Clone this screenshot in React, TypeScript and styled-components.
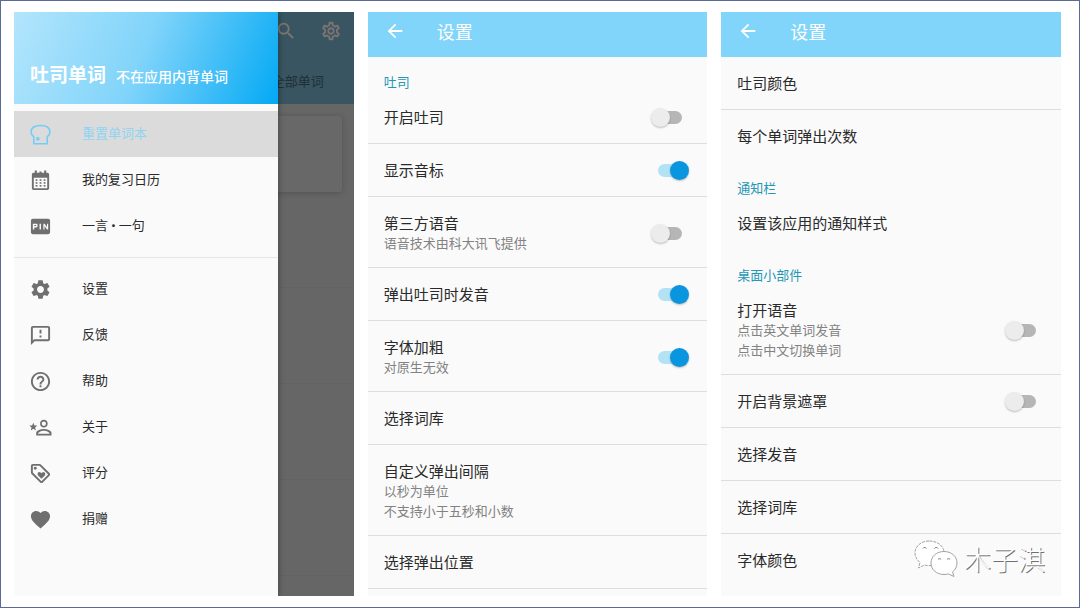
import React from "react";
import styled, { createGlobalStyle, css } from "styled-components";
import {
  MdArrowBack,
  MdFavorite,
  MdFiberPin,
  MdHelpOutline,
  MdOutlineFeedback,
  MdOutlineLoyalty,
  MdOutlineSettings,
  MdSearch,
  MdSettings,
} from "react-icons/md";

const GlobalStyle = createGlobalStyle`
  *, *::before, *::after { box-sizing: border-box; }
  body {
    margin: 0;
    background: #fff;
    color: #2a2a2a;
    font-family: "Noto Sans CJK SC", sans-serif;
    font-size: 13px;
    line-height: 20px;
  }
  button, input { font: inherit; color: inherit; }
`;

const Page = styled.main`
  display: grid;
  grid-template-columns: repeat(3, minmax(0, 1fr));
  gap: 14px;
  min-height: 100vh;
  padding: 11px 18px 11px 13px;
  border: 1px solid #5a6a96;
`;

const Phone = styled.section`
  position: relative;
  display: flex;
  flex-direction: column;
  background: #fafafa;
`;

/* ---------- home screen with the open drawer ---------- */

const HomePhone = styled.section`
  display: grid;
  overflow: hidden;
`;

const Dimmed = styled.div`
  grid-area: 1 / 1;
  display: flex;
  flex-direction: column;
  background: #666;
`;

const DimmedBar = styled.div`
  display: flex;
  flex-direction: column;
  align-items: flex-end;
  height: 92px;
  background: #385561;
  color: #1f2f37;
`;

const DimmedActions = styled.div`
  display: flex;
  gap: 23px;
  padding: 8px 12px 29px;
  color: #7d7472;
`;

const IconButton = styled.button`
  display: flex;
  padding: 0;
  border: 0;
  background: none;
`;

const DimmedTab = styled.span`
  padding-right: 30px;
`;

const DimmedCard = styled.div`
  height: 76px;
  margin: 12px 12px 0;
  border-radius: 3px;
  background: #686868;
  box-shadow: 0 1px 6px rgba(0, 0, 0, 0.2);
`;

const DimmedRow = styled.div`
  height: 96px;
  margin: 0 2px 0 12px;
  border-bottom: 1px solid #5d6466;
`;

const Drawer = styled.aside`
  grid-area: 1 / 1;
  width: 264px;
  background: #fafafa;
  box-shadow: 1px 0 5px rgba(0, 0, 0, 0.3);
`;

const DrawerHeader = styled.header`
  display: flex;
  align-items: baseline;
  gap: 10px;
  height: 92px;
  padding: 48px 16px 0;
  background: linear-gradient(112deg, #b3e5fc 0%, #81d4fa 48%, #03a9f4 100%);
  color: #fff;
`;

const AppName = styled.h1`
  margin: 0;
  font-size: 19px;
  line-height: 28px;
  font-weight: 700;
`;

const Slogan = styled.p`
  margin: 0;
  font-size: 14px;
  font-weight: 500;
`;

const MenuGroup = styled.nav`
  padding: 7px 0 8px;

  & + & {
    padding-top: 8px;
    border-top: 1px solid #e6e6e6;
  }
`;

const MenuItem = styled.a<{ $active?: boolean }>`
  display: flex;
  align-items: center;
  gap: 30px;
  height: 46px;
  padding: 0 15px;
  color: #2a2a2a;
  font-family: Roboto, "Noto Sans CJK SC", sans-serif;
  text-decoration: none;

  svg {
    color: #6f6f6f;
  }

  ${(p) =>
    p.$active &&
    css`
      background: #dbdbdb;
      color: #92d3f2;

      svg {
        color: #74cdf4;
      }
    `}
`;

/* ---------- settings screens ---------- */

const AppBar = styled.header`
  display: flex;
  align-items: center;
  gap: 31px;
  height: 45px;
  padding: 0 16px 8px;
  background: #81d4fa;
  color: #fff;
`;

const BarTitle = styled.h2`
  margin: 0;
  font-size: 18px;
  font-weight: 400;
`;

const Category = styled.h3`
  margin: 0;
  padding: 16px 16px 0;
  color: #2497b5;
  font-size: 13px;
  line-height: 18px;
  font-weight: 400;
`;

interface RowProps {
  $divider: boolean;
  $tall: boolean;
}

const rowStyle = css<RowProps>`
  display: flex;
  align-items: center;
  justify-content: space-between;
  width: 100%;
  min-height: 53px;
  padding: 16px 18px ${(p) => (p.$tall ? 14 : 16)}px 16px;
  border: 0;
  border-bottom: 1px solid ${(p) => (p.$divider ? "#dedede" : "transparent")};
  background: none;
  text-align: left;
`;

const SwitchRow = styled.label<RowProps>`
  ${rowStyle}
`;

const ButtonRow = styled.button<RowProps>`
  ${rowStyle}
`;

const RowText = styled.span`
  display: flex;
  flex-direction: column;
`;

const RowTitle = styled.span`
  font-size: 15px;
`;

const RowNote = styled.span`
  color: #828282;
`;

const Switch = styled.input`
  appearance: none;
  display: grid;
  align-items: center;
  width: 38px;
  height: 19px;
  margin: 0;

  &::before,
  &::after {
    content: "";
    grid-area: 1 / 1;
  }

  &::before {
    height: 13px;
    margin: 0 7px;
    border-radius: 7px;
    background: #b6b6b6;
  }

  &::after {
    width: 19px;
    height: 19px;
    border-radius: 50%;
    background: #ececec;
    box-shadow: 0 1px 2px rgba(0, 0, 0, 0.25);
  }

  &:checked::before {
    background: #b3e2f5;
  }

  &:checked::after {
    justify-self: end;
    background: #0a96df;
  }
`;

const Watermark = styled.div`
  position: absolute;
  right: 16px;
  bottom: 17px;
  display: flex;
  align-items: center;
  gap: 6px;
  color: #fff;
  font-size: 27px;
  line-height: 40px;
  font-weight: 300;
  text-shadow: 1px 1px 0 #707070;
`;

/* ---------- drawn icons ---------- */

const ICON = 23;

const ToastIcon = () => (
  <svg width={ICON} height={ICON} viewBox="0 0 24 24" fill="none" stroke="currentColor" strokeWidth="1.6" strokeLinejoin="round">
    <path d="M5 21.600v-7.400C3 13 2.200 11.200 2.200 9.300 2.200 4.800 6.500 2.600 12 2.600s9.800 2.200 9.800 6.700c0 1.900-.8 3.700-2.800 4.900v7.400z" />
    <path d="M9 14.500v4M7.500 15.500l3.500 2M11 15.500l-3.500 2" strokeWidth="1.200" />
  </svg>
);

const CalendarIcon = () => (
  <svg width={ICON} height={ICON} viewBox="0 0 24 24" fill="currentColor">
    <path fillRule="evenodd" d="M6 1.500h2.200V4h2.700V2.500h2.200V4h2.700V1.500H18V4h1.200c1.100 0 1.800.8 1.800 1.800v14.400c0 1-.8 1.800-1.800 1.800H4.800C3.800 22 3 21.200 3 20.200V5.800C3 4.800 3.700 4 4.800 4H6zM5 9v11h14V9z" />
    {[10.7, 13.7, 16.7].map((y) =>
      [6.9, 11.1, 15.3].map((x) => <rect key={`${x}-${y}`} x={x} y={y} width="1.900" height="1.700" />)
    )}
  </svg>
);

const AboutIcon = () => (
  <svg width={ICON} height={ICON} viewBox="0 0 24 24" fill="currentColor">
    <path fillRule="evenodd" d="M15.500 12c2.210 0 4-1.790 4-4s-1.790-4-4-4-4 1.790-4 4 1.790 4 4 4zm0-6.200c1.200 0 2.200 1 2.200 2.200s-1 2.200-2.200 2.200-2.200-1-2.200-2.200 1-2.200 2.200-2.200zm0 7.700c-2.670 0-8 1.340-8 4.200V20.300h16v-2.600c0-2.860-5.330-4.200-8-4.200zm-6.100 5c0-1.300 3.410-3.100 6.100-3.100 2.700 0 6.100 1.800 6.100 3.100z" />
    <path d="M4.500 7l1.200 2.800 3 .2-2.300 2 .7 3-2.600-1.600L1.900 15l.7-3L.3 10l3-.2z" />
  </svg>
);

const WeChatIcon = () => (
  <svg width="44" height="38" viewBox="0 0 44 38" fill="#fff" stroke="#a2a2a2" strokeWidth="1" strokeLinejoin="round">
    <path d="M15 1C7 1 1 6.500 1 13c0 4 2 7 5 9.500L4.500 28l6-3c1.500.4 3 .6 4.500.6 8 0 15-5.100 15-12.600S23 1 15 1z" strokeDasharray="3 1" />
    <path d="M30 11.500c-7.500 0-13 5-13 11.500s5.500 11.500 13 11.500c1.500 0 3-.2 4.400-.6l5.600 2.600-1.500-4.600c2.800-2 4.500-5.200 4.500-8.900 0-6.500-5.500-11.500-13-11.500z" />
    <path d="M9 8.500a2 2 0 0 1 3.500 0M20.500 8.500a2 2 0 0 1 3.500 0M24 19.500a2 2 0 0 1 3.200 0M33 19.500a2 2 0 0 1 3.200 0" fill="none" stroke="#777" />
  </svg>
);

/* ---------- data ---------- */

const mainMenu = [
  { label: "重置单词本", icon: <ToastIcon />, active: true },
  { label: "我的复习日历", icon: <CalendarIcon /> },
  { label: "一言 • 一句", icon: <MdFiberPin size={ICON} /> },
];

const moreMenu = [
  { label: "设置", icon: <MdSettings size={ICON} /> },
  { label: "反馈", icon: <MdOutlineFeedback size={ICON} /> },
  { label: "帮助", icon: <MdHelpOutline size={ICON} /> },
  { label: "关于", icon: <AboutIcon /> },
  { label: "评分", icon: <MdOutlineLoyalty size={ICON} /> },
  { label: "捐赠", icon: <MdFavorite size={ICON} /> },
];

type Setting = { title: string; notes?: string[]; on?: boolean };
type Section = { category?: string; rows: Setting[] };

const toastSettings: Section[] = [
  {
    category: "吐司",
    rows: [
      { title: "开启吐司", on: false },
      { title: "显示音标", on: true },
      { title: "第三方语音", notes: ["语音技术由科大讯飞提供"], on: false },
      { title: "弹出吐司时发音", on: true },
      { title: "字体加粗", notes: ["对原生无效"], on: true },
      { title: "选择词库" },
      { title: "自定义弹出间隔", notes: ["以秒为单位", "不支持小于五秒和小数"] },
      { title: "选择弹出位置" },
    ],
  },
];

const otherSettings: Section[] = [
  { rows: [{ title: "吐司颜色" }, { title: "每个单词弹出次数" }] },
  { category: "通知栏", rows: [{ title: "设置该应用的通知样式" }] },
  {
    category: "桌面小部件",
    rows: [
      { title: "打开语音", notes: ["点击英文单词发音", "点击中文切换单词"], on: false },
      { title: "开启背景遮罩", on: false },
      { title: "选择发音" },
      { title: "选择词库" },
      { title: "字体颜色" },
    ],
  },
];

function SettingRow({ setting, divider }: { setting: Setting; divider: boolean }) {
  const tall = setting.notes !== undefined;
  const text = (
    <RowText>
      <RowTitle>{setting.title}</RowTitle>
      {setting.notes?.map((note) => (
        <RowNote key={note}>{note}</RowNote>
      ))}
    </RowText>
  );
  if (setting.on === undefined) {
    return (
      <ButtonRow type="button" $divider={divider} $tall={tall}>
        {text}
      </ButtonRow>
    );
  }
  return (
    <SwitchRow $divider={divider} $tall={tall}>
      {text}
      <Switch type="checkbox" role="switch" defaultChecked={setting.on} />
    </SwitchRow>
  );
}

function SettingsScreen({
  sections,
  closed = false,
  children,
}: {
  sections: Section[];
  closed?: boolean;
  children?: React.ReactNode;
}) {
  return (
    <Phone>
      <AppBar>
        <IconButton type="button" aria-label="返回">
          <MdArrowBack size={22} />
        </IconButton>
        <BarTitle>设置</BarTitle>
      </AppBar>
      {sections.map((section, s) => (
        <React.Fragment key={s}>
          {section.category && <Category>{section.category}</Category>}
          {section.rows.map((row, i) => (
            <SettingRow key={row.title} setting={row} divider={closed || i < section.rows.length - 1} />
          ))}
        </React.Fragment>
      ))}
      {children}
    </Phone>
  );
}

export default function App() {
  return (
    <>
      <GlobalStyle />
      <Page>
        <HomePhone>
          <Dimmed>
            <DimmedBar>
              <DimmedActions>
                <IconButton type="button" aria-label="搜索">
                  <MdSearch size={22} />
                </IconButton>
                <IconButton type="button" aria-label="设置">
                  <MdOutlineSettings size={22} />
                </IconButton>
              </DimmedActions>
              <DimmedTab>全部单词</DimmedTab>
            </DimmedBar>
            <DimmedCard />
            <DimmedRow />
            <DimmedRow />
            <DimmedRow />
            <DimmedRow />
          </Dimmed>
          <Drawer>
            <DrawerHeader>
              <AppName>吐司单词</AppName>
              <Slogan>不在应用内背单词</Slogan>
            </DrawerHeader>
            <MenuGroup>
              {mainMenu.map((item) => (
                <MenuItem key={item.label} href="#" $active={item.active}>
                  {item.icon}
                  {item.label}
                </MenuItem>
              ))}
            </MenuGroup>
            <MenuGroup>
              {moreMenu.map((item) => (
                <MenuItem key={item.label} href="#">
                  {item.icon}
                  {item.label}
                </MenuItem>
              ))}
            </MenuGroup>
          </Drawer>
        </HomePhone>

        <SettingsScreen sections={toastSettings} closed />

        <SettingsScreen sections={otherSettings}>
          <Watermark>
            <WeChatIcon />
            木子淇
          </Watermark>
        </SettingsScreen>
      </Page>
    </>
  );
}
